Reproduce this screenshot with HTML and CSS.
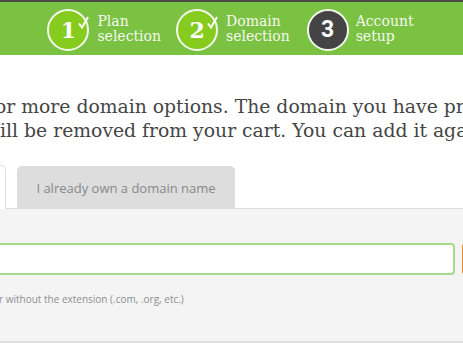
FILE: index.html
```html
<!DOCTYPE html>
<html lang="en">
<head>
    <meta charset="UTF-8">
    <meta name="viewport" content="width=device-width, initial-scale=1.0">
    <title>Domain selection</title>
    <link rel="stylesheet" href="styles.css">
</head>
<body>
    <header class="steps-bar">
        <ol class="steps">
            <li class="step step-done">
                <span class="step-badge">1
                    <svg class="step-check" width="11" height="13" viewBox="0 0 11 13"><path d="M1 7.5 L4 11.5 L10 1"/></svg>
                </span>
                <span class="step-label">Plan<br>selection</span>
            </li>
            <li class="step step-done">
                <span class="step-badge">2
                    <svg class="step-check" width="11" height="13" viewBox="0 0 11 13"><path d="M1 7.5 L4 11.5 L10 1"/></svg>
                </span>
                <span class="step-label">Domain<br>selection</span>
            </li>
            <li class="step step-current">
                <span class="step-badge">3</span>
                <span class="step-label">Account<br>setup</span>
            </li>
        </ol>
    </header>

    <main class="domain-page">
        <p class="intro">
            <span class="intro-line line-one">for more domain options. The domain you have previously selected</span>
            <span class="intro-line line-two">will be removed from your cart. You can add it again later.</span>
        </p>

        <div class="tabs">
            <div class="tab tab-active">Register a new domain</div>
            <div class="tab">I already own a domain name</div>
        </div>

        <div class="tab-panel">
            <div class="search-row">
                <input class="domain-input" type="text">
                <button type="button" class="search-btn">Search</button>
            </div>
            <p class="hint"><span class="hint-text">or without the extension (.com, .org, etc.)</span></p>
        </div>
    </main>
</body>
</html>
```

FILE: styles.css
```css
html, body {
    overflow: hidden;
}

body {
    margin: 0;
    font-family: "Open Sans", sans-serif;
    background: #fff;
}

/* bandeau des étapes */
.steps-bar {
    border-top: 2px solid #4a4a4a;
    background-color: #7bc142;
    height: 53px;
    display: flex;
    align-items: center;
    justify-content: center;
}

.steps {
    list-style: none;
    margin: 0;
    padding: 0;
    display: flex;
    gap: 15px;
    margin-left: -2px;
}

.step {
    display: flex;
    align-items: center;
    gap: 8px;
}

.step-badge {
    position: relative;
    width: 38px;
    height: 38px;
    border: 2px solid #f3f8ec;
    border-radius: 50%;
    background-color: #85cc1e;
    color: #fff;
    display: flex;
    align-items: center;
    justify-content: center;
    font-family: "DejaVu Serif", serif;
    font-weight: bold;
    font-size: 22px;
    margin-top: 2px;
}

.step-current .step-badge {
    background-color: #444;
    font-family: Roboto, "Liberation Sans", sans-serif;
    font-size: 23px;
}

.step-current {
    gap: 7px;
    margin-left: 2px;
}

.step-check {
    position: absolute;
    top: 5px;
    right: -2px;
}

.step-check path {
    fill: none;
    stroke: #fff;
    stroke-width: 2;
}

.step-label {
    font-family: "DejaVu Serif", serif;
    font-size: 14px;
    line-height: 14.5px;
    color: #f4f8ee;
}

/* texte d'introduction */
.intro {
    margin: 40px 0 22px;
    font-family: "DejaVu Serif", serif;
    font-size: 18.8px;
    line-height: 24px;
    color: #454545;
}

.intro-line {
    display: block;
    white-space: nowrap;
}

.line-one {
    margin-left: -12px;
}

.line-two {
    margin-left: -16px;
}

/* onglets */
.tabs {
    display: flex;
    gap: 11px;
    margin-left: -194px;
    height: 43px;
}

.tab {
    width: 218px;
    box-sizing: border-box;
    border-radius: 5px 5px 0 0;
    background-color: #ddd;
    color: #888;
    font-size: 13px;
    display: flex;
    align-items: center;
    justify-content: center;
    padding-top: 1px;
    margin-top: 1px;
}

.tab-active {
    width: 200px;
    margin-top: 0;
    background-color: #fff;
    border: 1px solid #e0e0e0;
    border-bottom: none;
    color: #555;
    height: 44px;
    position: relative;
    z-index: 1;
}

.tab-panel {
    background-color: #f4f4f4;
    border-top: 1px solid #ddd;
    border-bottom: 2px solid #dedede;
    padding: 34px 0 35px;
}

.search-row {
    display: flex;
    gap: 7px;
    margin: 0 -119px 0 -200px;
}

.domain-input {
    flex: 1;
    height: 32px;
    box-sizing: border-box;
    border: 2px solid #a6d98a;
    border-radius: 4px;
    background: #fff;
    outline: none;
}

.search-btn {
    flex: 0 0 120px;
    height: 32px;
    border: none;
    border-radius: 4px;
    background-color: #e88a2c;
    color: #fff;
}

.hint {
    margin: 17px 0 0;
    font-size: 10px;
    line-height: 14px;
    color: #8f8f8f;
    white-space: nowrap;
}

.hint-text {
    display: inline-block;
    margin-left: -7px;
}
```
